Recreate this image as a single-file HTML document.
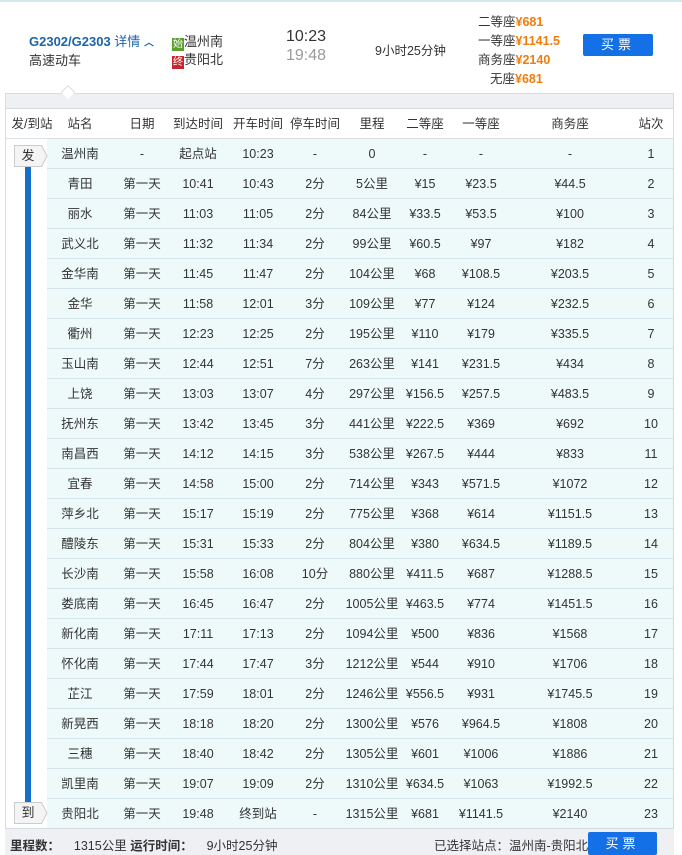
<!DOCTYPE html>
<html><head><meta charset="utf-8"><style>
*{margin:0;padding:0;box-sizing:border-box}
body{width:682px;height:855px;background:#fff;font-family:"Liberation Sans","Noto Sans CJK SC",sans-serif;font-size:12px;color:#333;position:relative;overflow:hidden}
.a{position:absolute;white-space:nowrap}
.topline{position:absolute;left:0;top:0;width:682px;height:2px;background:#d5e8ec}
.box{position:absolute;left:5px;top:93px;width:669px;height:762px;border:1px solid #d6dde2;background:#fff}
.band{position:absolute;left:5px;top:93px;width:669px;height:16px;background:#eef0f3;border:1px solid #d6dde2}
.hdr{position:absolute;left:6px;top:109px;width:667px;height:30px;border-bottom:1px solid #d9e1e6;background:#fff}
.row{position:absolute;left:47px;width:626px;height:30px;background:#eefafa;border-bottom:1px solid #d3e6ea}
.c{position:absolute;width:80px;text-align:center;line-height:30px;font-size:12.5px;color:#333}
.o{color:#f07c0c;font-weight:bold}
.btn{position:absolute;background:#1470e6;color:#fff;text-align:center;border-radius:2px;font-size:13px;letter-spacing:4px}
.badge{position:absolute;left:14px;width:34px;height:22px}
.badge span{position:absolute;left:0;top:0;width:28px;height:22px;line-height:22px;text-align:center;font-size:13px;color:#333}
.foot{position:absolute;left:5px;top:828px;width:669px;height:27px;background:#eef0f3;border-top:1px solid #d6dde2}
</style></head><body>
<div class="topline"></div>
<div class="a" style="left:29px;top:31px;font-size:13px;color:#1b64ad;font-weight:bold">G2302/G2303 <span style="font-weight:normal">详情</span> <span style="font-size:10px">︿</span></div>
<div class="a" style="left:29px;top:50px;font-size:13px">高速动车</div>
<div class="a" style="left:172px;top:31px;font-size:13px"><span style="display:inline-block;width:12px;height:13px;background:#5aa02c;color:#fff;font-size:10px;line-height:13px;text-align:center;vertical-align:-1px">始</span>温州南</div>
<div class="a" style="left:172px;top:49px;font-size:13px"><span style="display:inline-block;width:12px;height:13px;background:#c8262d;color:#fff;font-size:10px;line-height:13px;text-align:center;vertical-align:-1px">终</span>贵阳北</div>
<div class="a" style="left:286px;top:28px;font-size:16px;color:#333">10:23</div>
<div class="a" style="left:286px;top:47px;font-size:16px;color:#999">19:48</div>
<div class="a" style="left:375px;top:40px;font-size:12.5px">9小时25分钟</div>
<div class="a" style="left:478px;top:11px;font-size:12.5px">二等座<span class="o">¥681</span></div>
<div class="a" style="left:478px;top:30px;font-size:12.5px">一等座<span class="o">¥1141.5</span></div>
<div class="a" style="left:478px;top:49px;font-size:12.5px">商务座<span class="o">¥2140</span></div>
<div class="a" style="left:490px;top:68px;font-size:12.5px">无座<span class="o">¥681</span></div>
<div class="btn" style="left:583px;top:34px;width:70px;height:22px;line-height:22px">买票</div>
<div class="box"></div>
<div class="band"></div>
<div class="a" style="left:63px;top:87px;width:10px;height:10px;background:#fff;border-left:1px solid #d6dde2;border-top:1px solid #d6dde2;transform:rotate(45deg)"></div>
<div class="hdr"></div>
<div id="t"></div>
<div class="a" style="left:25px;top:160px;width:6px;height:650px;background:#1470c8"></div>
<div class="badge" style="top:145px"><svg width="34" height="22"><polygon points="0.5,0.5 27.5,0.5 33,11 27.5,21.5 0.5,21.5" fill="#f4f4f4" stroke="#ccc"/></svg><span>发</span></div>
<div class="badge" style="top:802px"><svg width="34" height="22"><polygon points="0.5,0.5 27.5,0.5 33,11 27.5,21.5 0.5,21.5" fill="#f4f4f4" stroke="#ccc"/></svg><span>到</span></div>
<div class="foot"></div>
<div class="a" style="left:10px;top:835px;font-size:12.5px"><b>里程数：</b>&nbsp;&nbsp;&nbsp;&nbsp;1315公里 <b>运行时间：</b>&nbsp;&nbsp;&nbsp;&nbsp;9小时25分钟</div>
<div class="a" style="left:434px;top:835px;font-size:12.5px">已选择站点：温州南-贵阳北</div>
<div class="btn" style="left:588px;top:832px;width:69px;height:23px;line-height:23px">买票</div>
<script>
var cx=[32,80,142,198,258,315,372,425,481,570,651];
var H=["发/到站","站名","日期","到达时间","开车时间","停车时间","里程","二等座","一等座","商务座","站次"];
var D=[
["温州南","-","起点站","10:23","-","0","-","-","-"],
["青田","第一天","10:41","10:43","2分","5公里","¥15","¥23.5","¥44.5"],
["丽水","第一天","11:03","11:05","2分","84公里","¥33.5","¥53.5","¥100"],
["武义北","第一天","11:32","11:34","2分","99公里","¥60.5","¥97","¥182"],
["金华南","第一天","11:45","11:47","2分","104公里","¥68","¥108.5","¥203.5"],
["金华","第一天","11:58","12:01","3分","109公里","¥77","¥124","¥232.5"],
["衢州","第一天","12:23","12:25","2分","195公里","¥110","¥179","¥335.5"],
["玉山南","第一天","12:44","12:51","7分","263公里","¥141","¥231.5","¥434"],
["上饶","第一天","13:03","13:07","4分","297公里","¥156.5","¥257.5","¥483.5"],
["抚州东","第一天","13:42","13:45","3分","441公里","¥222.5","¥369","¥692"],
["南昌西","第一天","14:12","14:15","3分","538公里","¥267.5","¥444","¥833"],
["宜春","第一天","14:58","15:00","2分","714公里","¥343","¥571.5","¥1072"],
["萍乡北","第一天","15:17","15:19","2分","775公里","¥368","¥614","¥1151.5"],
["醴陵东","第一天","15:31","15:33","2分","804公里","¥380","¥634.5","¥1189.5"],
["长沙南","第一天","15:58","16:08","10分","880公里","¥411.5","¥687","¥1288.5"],
["娄底南","第一天","16:45","16:47","2分","1005公里","¥463.5","¥774","¥1451.5"],
["新化南","第一天","17:11","17:13","2分","1094公里","¥500","¥836","¥1568"],
["怀化南","第一天","17:44","17:47","3分","1212公里","¥544","¥910","¥1706"],
["芷江","第一天","17:59","18:01","2分","1246公里","¥556.5","¥931","¥1745.5"],
["新晃西","第一天","18:18","18:20","2分","1300公里","¥576","¥964.5","¥1808"],
["三穗","第一天","18:40","18:42","2分","1305公里","¥601","¥1006","¥1886"],
["凯里南","第一天","19:07","19:09","2分","1310公里","¥634.5","¥1063","¥1992.5"],
["贵阳北","第一天","19:48","终到站","-","1315公里","¥681","¥1141.5","¥2140"]];
var h="";
for(var i=0;i<11;i++)h+='<div class="c" style="left:'+(cx[i]-40)+'px;top:109px">'+H[i]+'</div>';
for(var r=0;r<23;r++){var y=139+r*30;h+='<div class="row" style="top:'+y+'px"></div>';
var v=D[r].concat([String(r+1)]);
for(var j=0;j<10;j++)h+='<div class="c" style="left:'+(cx[j+1]-40)+'px;top:'+y+'px">'+v[j]+'</div>';}
document.getElementById("t").innerHTML=h;
</script>
</body></html>
